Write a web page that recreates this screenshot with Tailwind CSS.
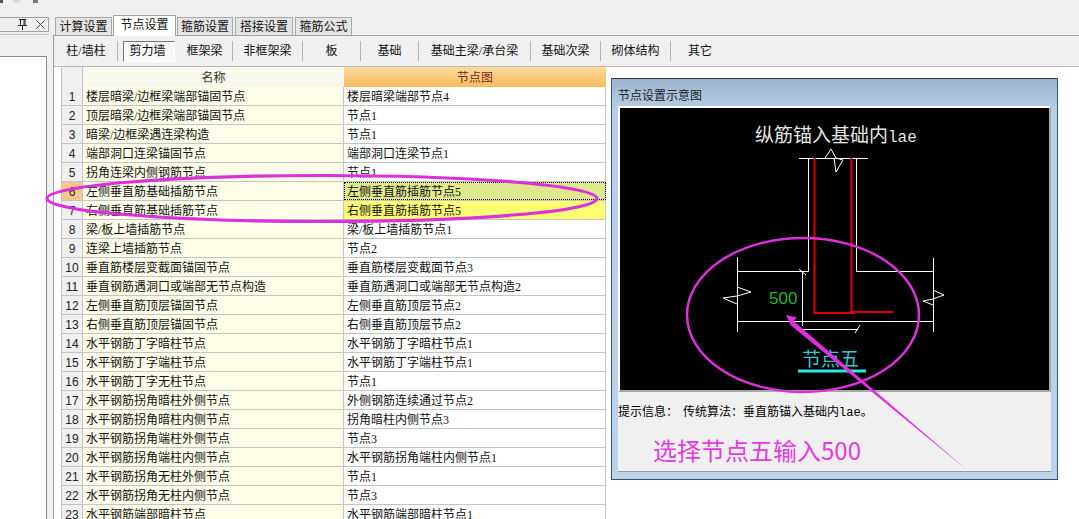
<!DOCTYPE html>
<html lang="zh-CN">
<head>
  <meta charset="UTF-8" />
  <title>节点设置</title>
  <script src="https://cdn.jsdelivr.net/npm/@tailwindcss/browser@4"></script>
</head>
<body class="bg-[#f0f0f0] h-[519px] overflow-hidden relative font-['Liberation_Serif','Noto_Sans_CJK_SC',serif] text-[12px] leading-none text-[#111]">
  <div class="flex h-[519px]">

    <!-- Left docked panel -->
    <aside class="w-[53px] shrink-0 flex flex-col">
      <!-- toolbar icons, cut off by the top edge -->
      <div class="h-[3px] flex">
        <span class="w-[3px] bg-[#555]"></span>
        <span class="ml-[10px] w-[7px] bg-[#dcdcdc]"></span>
        <span class="ml-[13px] w-[5px] bg-[#777]"></span>
      </div>
      <div class="mt-[14px] h-[15px] w-[49px] border border-l-0 border-[#a0a0a0] flex items-center justify-end gap-[9px] pr-[3px]">
        <svg width="9" height="11" viewBox="0 0 9 11" fill="none" stroke="#222"><path d="M1 0.500H8M2.500 1V6M6 1V6M7 1V6M0 6.500H9M4.500 7V11" /></svg>
        <svg width="9" height="9" viewBox="0 0 9 9" fill="none" stroke="#444"><path d="M0.500 0.500L8.500 8.500M8.500 0.500L0.500 8.500" /></svg>
      </div>
      <div class="mt-[2px] h-[22px] w-[49px] border-t border-[#c4c4c4]"></div>
      <div class="w-[47px] flex-1 bg-white border-t border-r border-[#8a8a8a]"></div>
    </aside>

    <!-- Tabbed content -->
    <main class="flex-1 flex flex-col pt-[15px]">
      <nav class="flex h-[20px] items-end pl-[2px] gap-[2px]">
        <div class="w-[57px] h-[18px] flex items-center justify-center bg-[#e4e4e4] border border-b-0 border-[#a8a8a8]">计算设置</div>
        <div class="w-[63px] h-[21px] flex items-center justify-center bg-white border border-b-0 border-[#a0a0a0] -mx-[1px] pb-[3px] relative top-[1px] z-10">节点设置</div>
        <div class="w-[56px] h-[18px] flex items-center justify-center bg-[#e4e4e4] border border-b-0 border-[#a8a8a8]">箍筋设置</div>
        <div class="w-[58px] h-[18px] flex items-center justify-center bg-[#e4e4e4] border border-b-0 border-[#a8a8a8]">搭接设置</div>
        <div class="w-[57px] h-[18px] flex items-center justify-center bg-[#e4e4e4] border border-b-0 border-[#a8a8a8]">箍筋公式</div>
      </nav>

      <div class="flex-1 bg-white border-t border-l border-[#a0a0a0] flex flex-col">
        <div class="h-[30px] bg-[#f0f0f0] flex items-center pl-[1px] shrink-0">
          <div class="w-[63px] h-[20px] flex items-center justify-center border-r border-[#b4b4b4]">柱/墙柱</div>
          <div class="w-[61px] h-[20px] flex items-center pl-[5px]"><span class="w-[52px] h-[21px] flex items-center justify-center pr-[3px] border border-t-[#777] border-l-[#777] border-r-white border-b-white bg-[#f7f7f7]">剪力墙</span></div>
          <div class="w-[54px] h-[20px] flex items-center justify-center pr-[2px] border-r border-[#b4b4b4]">框架梁</div>
          <div class="w-[70px] h-[20px] flex items-center justify-center border-r border-[#b4b4b4]">非框架梁</div>
          <div class="w-[58px] h-[20px] flex items-center justify-center border-r border-[#b4b4b4]">板</div>
          <div class="w-[58px] h-[20px] flex items-center justify-center border-r border-[#b4b4b4]">基础</div>
          <div class="w-[112px] h-[20px] flex items-center justify-center border-r border-[#b4b4b4]">基础主梁/承台梁</div>
          <div class="w-[70px] h-[20px] flex items-center justify-center border-r border-[#b4b4b4]">基础次梁</div>
          <div class="w-[70px] h-[20px] flex items-center justify-center border-r border-[#b4b4b4]">砌体结构</div>
          <div class="w-[58px] h-[20px] flex items-center justify-center">其它</div>
        </div>

        <div class="flex flex-1 min-h-0 border-t border-[#b8b8b8] pl-[7px]">
          <!-- Settings grid -->
          <div class="w-[545px] shrink-0 overflow-hidden border-l border-[#c4c4c4]">
            <div class="flex h-[20px]">
              <div class="w-[21px] bg-[#f0f0f0] border-r border-[#c4c4c4]"></div>
              <div class="w-[261px] bg-[#f8f8ec] flex items-center justify-center pt-px text-[#333]">名称</div>
              <div class="w-[262px] bg-gradient-to-b from-[#fbdc9c] to-[#f6bd5e] flex items-center justify-center pt-px text-[#7a1f1f]">节点图</div>
            </div>
            <div id="rows"></div>
          </div>

          <!-- Node preview panel -->
          <section class="ml-[5px] mt-[11px] w-[447px] h-[402px] border border-[#2f5a68] border-t-[#3a3a3a] bg-gradient-to-b from-[#9cb4d2] via-[#b8cfe7] via-[8%] to-[#bcd2e9] flex flex-col px-[6px] pb-[7px]">
            <div class="h-[27px] flex items-center pt-[7px] text-[#222]">节点设置示意图</div>
            <div class="h-[286px] bg-black border-2 border-t-white border-l-white border-r-[#a8a8a8] border-b-[#a8a8a8]"></div>
            <div class="flex-1 bg-[#f0f0f0] border-b border-[#999] flex flex-col">
              <p class="pt-[14px] text-black flex"><span class="w-[65px]">提示信息：</span><span>传统算法：垂直筋锚入基础内<span class="font-['Liberation_Mono',monospace]">lae</span>。</span></p>
              <p class="pt-[19px] pl-[35px] text-[24px] text-[#e23be0] font-['Noto_Sans_CJK_SC',sans-serif]">选择节点五输入500</p>
            </div>
          </section>
        </div>
      </div>
    </main>
  </div>

  <!-- Drawing and hand-made annotations over the screenshot -->
  <svg class="absolute inset-0 pointer-events-none" width="1079" height="519" viewBox="0 0 1079 519" fill="none">
    <g stroke="#fff" stroke-width="1">
      <path d="M799 158.500H868M808.500 158V271.500H737M856.500 158V271.500H933M737.500 257V332M933.500 258V332M737 321.500H933M802.500 272V326M802 329.500H858" />
      <path d="M825 158L831 149L836 158L843 160L836 172L834 158" />
      <path d="M737 287L751 292L737 296L723 298L737 304" />
      <path d="M933 290L944 295L933 299L923 301L933 305" />
      <path d="M799 269L806 275M855 333L860 325" />
    </g>
    <path d="M814.500 158V313H855M851.500 158V312H893" stroke="#e00000" stroke-width="2" />
    <path d="M798 371H866" stroke="#2fe6e6" stroke-width="3" />
    <text x="755" y="142" fill="#e6e6e6" font-size="19" font-family="'Liberation Mono','Noto Sans CJK SC',monospace">纵筋锚入基础内<tspan font-size="16">lae</tspan></text>
    <text x="769" y="304" fill="#25b525" font-size="17" font-family="'Liberation Sans',sans-serif">500</text>
    <text x="802" y="366" fill="#35c9c9" font-size="19" font-family="'Noto Sans CJK SC',sans-serif">节点五</text>
    <g stroke="#dc30dc">
      <ellipse cx="322" cy="198.500" rx="275" ry="23" stroke-width="3.200" />
      <ellipse cx="803" cy="315" rx="116" ry="77" stroke-width="2.500" />
    </g>
    <path d="M786 315L797 317.500L793.500 321L967 470L790.500 325Z" fill="#dc30dc" />
  </svg>

  <script>
    const rows = [
      ['楼层暗梁/边框梁端部锚固节点', '楼层暗梁端部节点4'],
      ['顶层暗梁/边框梁端部锚固节点', '节点1'],
      ['暗梁/边框梁遇连梁构造', '节点1'],
      ['端部洞口连梁锚固节点', '端部洞口连梁节点1'],
      ['拐角连梁内侧钢筋节点', '节点1'],
      ['左侧垂直筋基础插筋节点', '左侧垂直筋插筋节点5'],
      ['右侧垂直筋基础插筋节点', '右侧垂直筋插筋节点5'],
      ['梁/板上墙插筋节点', '梁/板上墙插筋节点1'],
      ['连梁上墙插筋节点', '节点2'],
      ['垂直筋楼层变截面锚固节点', '垂直筋楼层变截面节点3'],
      ['垂直钢筋遇洞口或端部无节点构造', '垂直筋遇洞口或端部无节点构造2'],
      ['左侧垂直筋顶层锚固节点', '左侧垂直筋顶层节点2'],
      ['右侧垂直筋顶层锚固节点', '右侧垂直筋顶层节点2'],
      ['水平钢筋丁字暗柱节点', '水平钢筋丁字暗柱节点1'],
      ['水平钢筋丁字端柱节点', '水平钢筋丁字端柱节点1'],
      ['水平钢筋丁字无柱节点', '节点1'],
      ['水平钢筋拐角暗柱外侧节点', '外侧钢筋连续通过节点2'],
      ['水平钢筋拐角暗柱内侧节点', '拐角暗柱内侧节点3'],
      ['水平钢筋拐角端柱外侧节点', '节点3'],
      ['水平钢筋拐角端柱内侧节点', '水平钢筋拐角端柱内侧节点1'],
      ['水平钢筋拐角无柱外侧节点', '节点1'],
      ['水平钢筋拐角无柱内侧节点', '节点3'],
      ['水平钢筋端部暗柱节点', '水平钢筋端部暗柱节点1']
    ];

    document.getElementById('rows').innerHTML = rows.map((row, i) => {
      const num = i + 1;
      const numBg = num === 6 ? 'bg-[#fbc88a]' : 'bg-[#f0f0f0]';
      let valueBg = 'bg-white';
      if (num === 6) valueBg = 'bg-[#dfe88c] outline-1 outline-dotted outline-black -outline-offset-1';
      if (num === 7) valueBg = 'bg-[#fdfd74]';
      return `<div class="flex h-[19px] border-b border-[#c4c4c4]">
        <div class="w-[21px] ${numBg} border-r border-[#c4c4c4] flex items-center justify-center pt-px text-[#222] font-['Liberation_Sans',sans-serif]">${num}</div>
        <div class="w-[261px] bg-[#fefee8] border-r border-[#c4c4c4] flex items-center pl-[3px] pt-px">${row[0]}</div>
        <div class="w-[262px] ${valueBg} border-r border-[#c4c4c4] flex items-center pl-[3px] pt-px">${row[1]}</div>
      </div>`;
    }).join('');
  </script>
</body>
</html>
